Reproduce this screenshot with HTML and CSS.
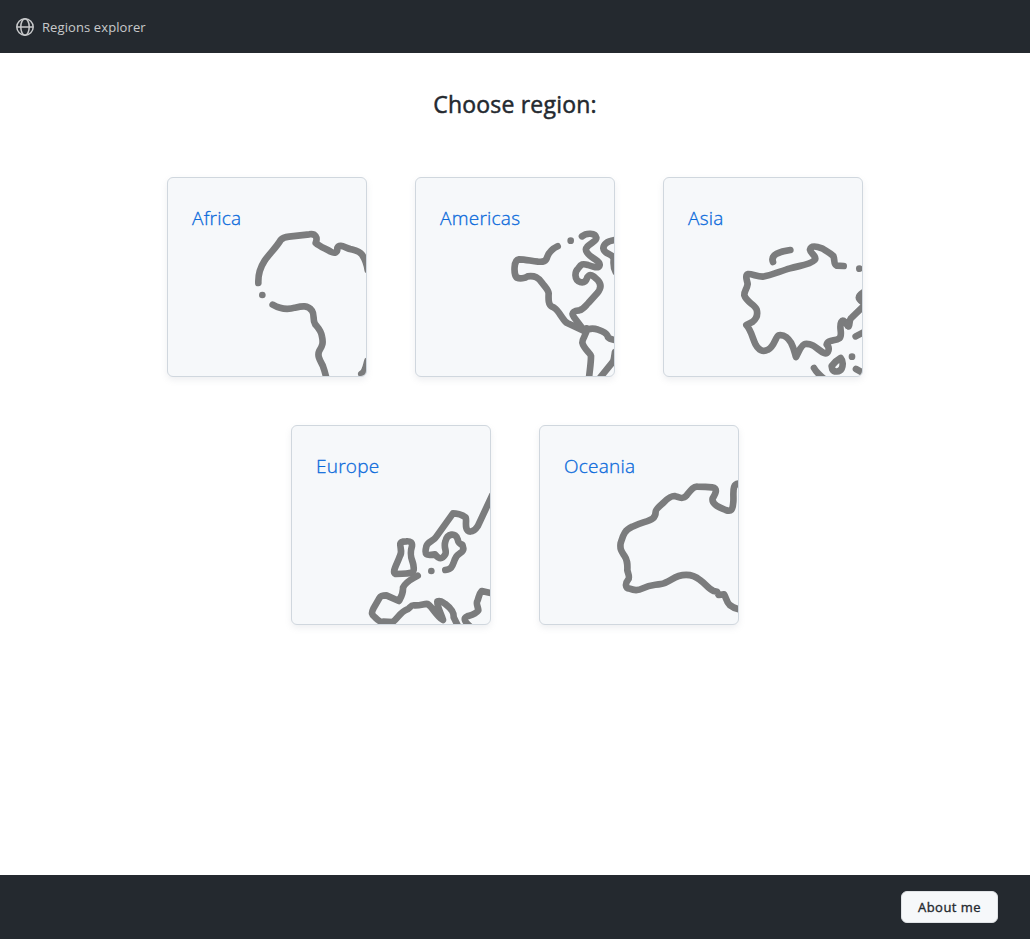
FILE: index.html
```html
<!DOCTYPE html>
<html lang="en">
<head>
<meta charset="utf-8">
<title>Regions explorer</title>
<link rel="stylesheet" href="styles.css">
</head>
<body>
<header class="header">
  <a class="brand">
    <svg class="globe" viewBox="0 0 18 18"><circle cx="9" cy="9" r="8.2"/><ellipse cx="9" cy="9" rx="4.2" ry="8.2"/><path d="M1 9H17"/></svg>
    <span class="brand-name">Regions explorer</span>
  </a>
</header>
<main class="main">
  <h1 class="heading">Choose region:</h1>
  <div class="regions">
    <a class="card">
      <span class="card-title">Africa</span>
      <svg class="map" viewBox="24 24 594 594">
        <path d="M295 339C294 315 301 292 314 272C329 250 350 231 362 210C369 202 377 201 387 200L448 193C466 190 474 202 467 219C481 231 498 236 512 245C525 252 533 247 532 234C538 221 552 231 570 237C586 241 598 242 606 254C616 269 620 280 623 300"/>
        <path d="M338 404C357 415 383 420 405 413C427 408 443 405 456 422C465 435 457 450 465 462C475 474 484 482 486 500C490 519 488 526 478 542C471 557 479 569 488 586C493 600 496 609 499 624M604 612C616 605 616 596 622 573"/>
        <circle class="dot" cx="307" cy="375" r="10"/>
      </svg>
    </a>
    <a class="card">
      <span class="card-title">Americas</span>
      <svg class="map" viewBox="24 24 594 594">
        <path d="M449 229C434 236 424 244 418 260C414 275 406 276 390 275C369 273 352 268 333 268C316 270 317 312 326 323C336 327 351 325 359 319C381 316 391 323 402 338C412 352 421 360 422 370C421 389 421 405 432 410C444 414 449 423 456 433C464 443 469 455 479 460L530 484L498 442C486 425 503 422 514 421C526 418 532 408 541 399L568 369C580 355 580 342 569 330C555 316 546 309 538 322C534 334 528 339 516 336C498 329 500 305 510 296C520 282 524 280 540 285C556 291 570 295 574 288C579 278 568 272 560 267C537 254 529 239 537 231C548 218 567 213 565 203C562 188 535 188 522 199"/>
        <path d="M622 210C601 213 587 220 586 235C588 251 607 251 614 260C622 268 610 281 623 306"/>
        <path d="M530 484C544 473 557 474 570 479C584 484 598 489 600 502C603 506 613 509 622 510M536 475C538 493 523 502 523 518C527 537 547 549 549 558C549 580 545 602 543 624"/>
        <path d="M569 632L606 586C617 572 616 580 621 546"/>
        <circle class="dot" cx="488" cy="212" r="10"/>
      </svg>
    </a>
    <a class="card">
      <span class="card-title">Asia</span>
      <svg class="map" viewBox="24 24 594 594">
        <path d="M351 276C346 263 353 256 362 251C376 244 388 242 403 240M563 288L542 287C532 283 537 269 532 258C520 247 510 243 498 235C482 229 465 225 462 239C464 252 485 259 476 270C460 286 432 286 402 295C374 303 345 316 320 320C302 319 290 312 277 312C265 315 274 333 275 342C273 357 264 363 265 376C272 398 296 402 302 419C307 438 300 448 289 456L271 465C286 481 289 504 299 524C308 540 320 548 336 539C356 529 358 500 368 496C389 493 398 508 405 518C413 533 416 548 420 561L432 537C442 521 447 520 461 523C478 527 490 543 504 549C519 555 522 532 512 524C515 508 538 514 550 505C562 493 547 472 556 456C563 444 568 461 578 469C583 459 578 450 587 443L621 410"/>
        <path d="M622 367C603 379 605 387 622 398M622 487L599 499M474 594C483 611 496 618 508 630M600 597L625 611"/>
        <path d="M527 588C535 577 545 569 554 564C562 573 561 588 557 596C551 607 534 607 529 598ZM576 460V468M615 376V390"/>
        <circle class="dot" cx="610" cy="296" r="10"/>
        <circle class="dot" cx="588" cy="560" r="10"/>
      </svg>
    </a>
    <a class="card">
      <span class="card-title">Europe</span>
      <svg class="map" viewBox="24 24 594 594">
        <path d="M624 233L581 325C567 347 550 343 547 330C544 318 548 306 545 298C534 290 515 286 507 286L457 356C449 370 429 371 427 386C420 413 427 413 453 409C466 425 475 424 484 409C489 397 478 389 484 371C489 346 516 342 521 364C523 375 526 377 535 380L538 392C539 403 524 404 517 416C508 430 510 439 501 449C497 454 491 455 484 456"/>
        <path d="M349 377C350 371 358 370 367 370C380 369 385 374 384 384C375 413 384 422 388 440C392 467 390 467 335 468C322 464 339 439 347 416C357 401 347 389 349 377Z"/>
        <path d="M401 473C386 482 365 490 357 509C358 528 350 540 345 549L307 532C300 532 291 532 287 539L268 572C262 584 262 590 274 599C285 610 291 614 298 611L326 612C340 603 349 582 368 575C377 574 379 560 391 562C411 563 422 556 431 558C448 570 456 593 477 606C472 588 459 567 460 550C472 546 476 554 484 558C505 574 510 584 509 598L522 624M560 627C543 612 535 600 551 594C563 591 574 590 583 577C583 568 575 557 580 549C585 539 584 528 593 519L623 526"/>
        <circle class="dot" cx="442" cy="459" r="10"/>
      </svg>
    </a>
    <a class="card">
      <span class="card-title">Oceania</span>
      <svg class="map" viewBox="24 24 594 594">
        <path d="M624 197C597 195 606 227 604 251C602 277 598 282 581 276C560 268 538 258 542 241C552 226 558 211 540 208C522 206 508 206 496 206C481 205 473 222 463 233C451 247 439 236 428 234C413 233 402 247 390 258C382 265 371 275 371 281C371 311 342 306 301 326C276 337 273 354 266 375C263 394 269 401 277 413C286 426 287 436 286 457C288 466 294 477 289 484C279 496 279 511 293 512C305 517 319 518 332 511C355 499 366 502 387 498C406 495 421 480 440 474C463 467 487 472 504 486C524 500 530 514 545 519L555 521L560 531L576 529C583 538 582 550 593 561C602 568 611 573 625 574"/>
      </svg>
    </a>
  </div>
</main>
<footer class="footer"><button class="about"><span class="about-label">About me</span></button></footer>
</body>
</html>
```
FILE: styles.css
```css
* { box-sizing: border-box; }
body {
  margin: 0;
  height: 939px;
  display: flex;
  flex-direction: column;
  background: #fff;
  color: #24292f;
  font-family: "Open Sans", "Noto Sans", sans-serif;
}
.header {
  height: 53px;
  padding: 1px 16px 0;
  display: flex;
  align-items: center;
  background: #24292f;
}
.brand {
  display: flex;
  align-items: center;
  gap: 8px;
  color: #c8c9cb;
  font-size: 13px;
  letter-spacing: .1px;
}
.globe { width: 18px; height: 18px; fill: none; stroke: #c8c9cb; stroke-width: 1.5; }
.main { flex: 1; }
.heading {
  margin: 35px 0 0;
  line-height: 33px;
  text-align: center;
  font-size: 23px;
  font-weight: 400;
  letter-spacing: .2px;
  -webkit-text-stroke: .5px #24292f;
}
.regions {
  width: 744px;
  margin: 56px auto 0;
  display: flex;
  flex-wrap: wrap;
  justify-content: center;
  gap: 48px;
}
.card {
  width: 200px;
  height: 200px;
  display: grid;
  overflow: hidden;
  border: 1px solid #d0d7de;
  border-radius: 6px;
  background: #f6f8fa;
  box-shadow: 0 3px 6px rgba(140, 149, 159, .15);
}
.card-title {
  grid-area: 1 / 1;
  padding: 25px 0 0 24px;
  line-height: 30px;
  font-size: 19px;
  font-weight: 300;
  letter-spacing: .25px;
  color: #0969da;
  -webkit-text-stroke: .3px #0969da;
}
.map {
  grid-area: 1 / 1;
  width: 198px;
  height: 198px;
  fill: none;
  stroke: #7b7c7d;
  stroke-width: 20;
  stroke-linecap: round;
  stroke-linejoin: round;
}
.dot { fill: #7b7c7d; stroke: none; }
.footer {
  height: 64px;
  padding: 0 32px;
  display: flex;
  align-items: center;
  justify-content: flex-end;
  background: #24292f;
}
.about {
  width: 97px;
  height: 32px;
  padding: 0;
  border: 1px solid #dfe2e5;
  border-radius: 6px;
  background: #f6f8fa;
  color: #24292f;
  font: 400 13px/20px "Open Sans", "Noto Sans", sans-serif;
  letter-spacing: .45px;
  -webkit-text-stroke: .35px #24292f;
}
```
